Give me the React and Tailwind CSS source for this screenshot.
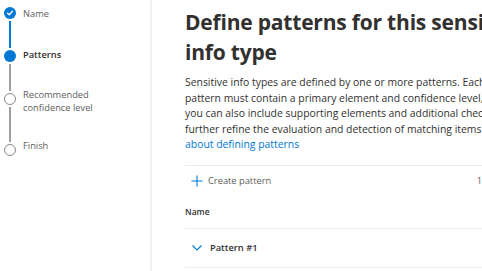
import React from "react";

function StepDot({ state }) {
  if (state === "done") {
    return (
      <div className="w-[12px] h-[12px] rounded-full bg-[#0078d4] flex items-center justify-center">
        <svg width="8" height="8" viewBox="0 0 8 8" fill="none">
          <path d="M1.5 4.2 L3.3 5.8 L6.5 2.2" stroke="white" strokeWidth="1.3" strokeLinecap="round" strokeLinejoin="round" />
        </svg>
      </div>
    );
  }
  if (state === "current") {
    return <div className="w-[12px] h-[12px] rounded-full bg-[#0078d4]" />;
  }
  return <div className="w-[12px] h-[12px] rounded-full border-[1.5px] border-[#8a8886] bg-white" />;
}

const lines = [
  "Sensitive info types are defined by one or more patterns. Each",
  "pattern must contain a primary element and confidence level,",
  "you can also include supporting elements and additional checks to",
];

export default function App() {
  return (
    <div className="w-[482px] h-[271px] overflow-hidden bg-white flex font-['Open_Sans',sans-serif]">
      <div className="w-[152px] shrink-0 border-r-2 border-[#f3f2f1] pl-[4px] pt-[7px]">
        <div className="flex gap-[7px]">
          <div className="flex flex-col items-center w-[12px]">
            <StepDot state="done" />
            <div className="w-[2px] h-[27px] bg-[#0078d4] my-[2px]" />
            <StepDot state="current" />
            <div className="w-[1.5px] h-[27px] bg-[#a19f9d] my-[2px]" />
            <StepDot state="todo" />
            <div className="w-[1.5px] h-[35px] bg-[#a19f9d] my-[2px]" />
            <StepDot state="todo" />
          </div>
          <div className="flex flex-col text-[9.3px] leading-[13px] text-[#605e5c]">
            <div className="h-[12px] flex items-center">Name</div>
            <div className="h-[29px]" />
            <div className="h-[12px] flex items-center font-semibold text-[#323130]">Patterns</div>
            <div className="h-[29px]" />
            <div className="mt-[-1px]">Recommended<br />confidence level</div>
            <div className="h-[25px]" />
            <div className="h-[12px] flex items-center">Finish</div>
          </div>
        </div>
      </div>
      <div className="flex-1 pl-[33px] pt-[7px] overflow-hidden">
        <div className="w-[330px]">
          <h1 className="text-[21px] leading-[30px] font-bold tracking-[-0.2px] text-[#323130] whitespace-nowrap">
            Define patterns for this sensitive
            <br />
            info type
          </h1>
          <p className="mt-[8px] text-[10.4px] leading-[15.5px] text-[#323130] whitespace-nowrap">
            {lines.map((l) => (
              <span key={l} className="block">{l}</span>
            ))}
            <span className="block">
              further refine the evaluation and detection of matching items.{" "}
              <span className="text-[#0078d4]">Learn more</span>
            </span>
            <span className="block text-[#0078d4]">about defining patterns</span>
          </p>
          <div className="mt-[12px] border-t border-[#edebe9]" />
          <div className="h-[31px] flex items-center justify-between pl-[6px] text-[9.3px] text-[#605e5c]">
            <div className="flex items-center gap-[5px]">
              <svg width="12" height="12" viewBox="0 0 12 12">
                <path d="M6 0.5 V11.5 M0.5 6 H11.5" stroke="#0078d4" strokeWidth="1.1" />
              </svg>
              <span>Create pattern</span>
            </div>
            <span className="mr-[33px]">1</span>
          </div>
          <div className="h-[31px] flex items-end pb-[9px] text-[8.5px] font-semibold text-[#323130]">Name</div>
          <div className="border-t border-[#edebe9]" />
          <div className="h-[38px] flex items-center gap-[8px] pl-[7px] text-[9.3px] font-semibold text-[#323130]">
            <svg width="10" height="6" viewBox="0 0 10 6" fill="none">
              <path d="M0.5 0.5 L5 5 L9.5 0.5" stroke="#0078d4" strokeWidth="1.1" />
            </svg>
            <span>Pattern #1</span>
          </div>
          <div className="border-t border-[#edebe9]" />
        </div>
      </div>
    </div>
  );
}
